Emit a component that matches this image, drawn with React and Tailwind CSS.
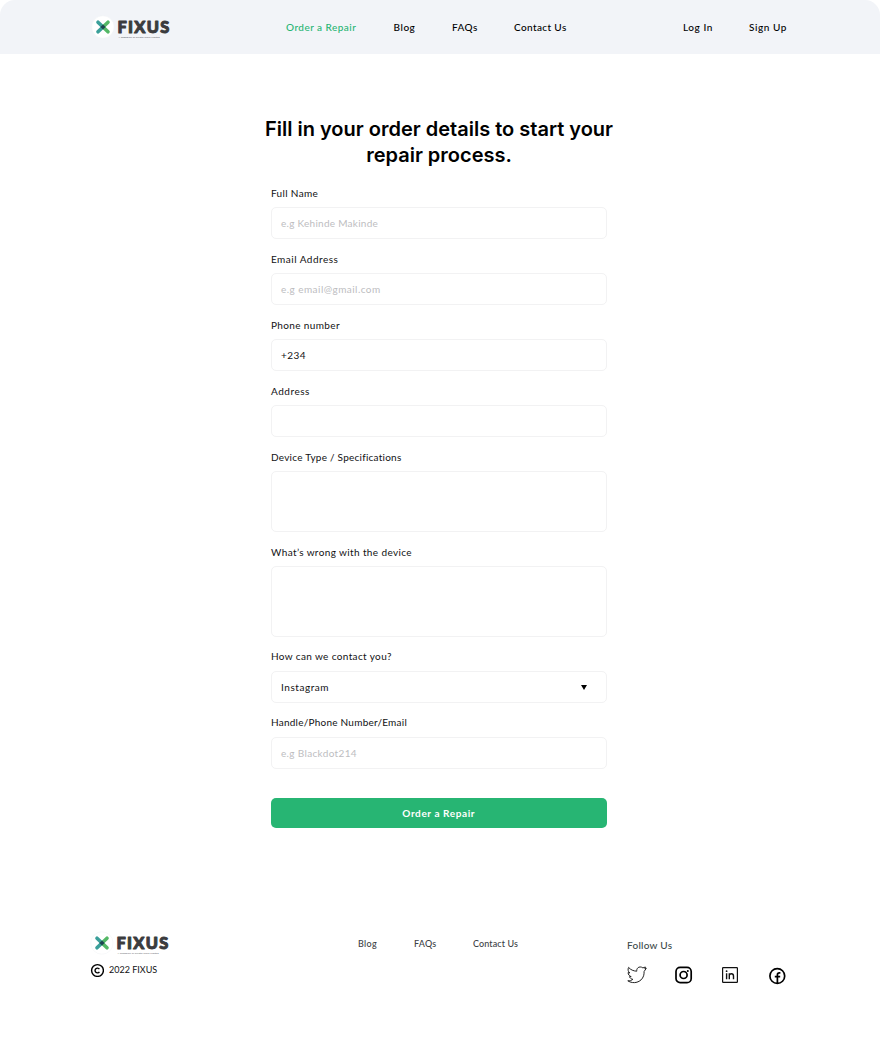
import React from "react";

function Logo({ className }) {
  return (
    <svg width="80" height="24" viewBox="0 0 80 24" className={className} role="img" aria-label="Fixus">
      <circle cx="11.9" cy="12" r="11.2" fill="#ffffff" stroke="#f1f2f4" strokeWidth="0.5" />
      <g strokeWidth="3.6" strokeLinecap="round">
        <path d="M7 7.2 12 12" stroke="#3a9f9a" />
        <path d="M12 12 17 7.2" stroke="#54b866" />
        <path d="M7 16.8 12 12" stroke="#3a9f9a" />
        <path d="M12 12 17 16.8" stroke="#54b866" />
      </g>
      <path d="M12 9.4 14.6 12 12 14.6 9.4 12Z" fill="#1c4450" />
      <text
        x="26.4"
        y="18.1"
        textLength="51.8"
        lengthAdjust="spacing"
        fill="#3b3c3e"
        stroke="#3b3c3e"
        strokeWidth="1"
        strokeLinejoin="round"
        className="font-['Lato',sans-serif] text-[16.4px] font-black"
      >
        FIXUS
      </text>
      <text
        x="27.6"
        y="22.6"
        textLength="41"
        lengthAdjust="spacingAndGlyphs"
        fill="#66686c"
        className="font-['Lato',sans-serif] text-[2.6px]"
      >
        A subsidiary of Crystal Wave Limited
      </text>
    </svg>
  );
}

function Field({ label, labelClass, boxClass = "h-[32px]", children }) {
  return (
    <div>
      <div className={`h-[14px] text-[10px] leading-[14px] whitespace-nowrap ${labelClass}`}>{label}</div>
      <div
        className={`mt-[7.4px] flex w-full items-center rounded-[5px] border border-[#f2f2f3] px-[9px] text-[10px] leading-[14px] ${boxClass}`}
      >
        {children}
      </div>
    </div>
  );
}

function Copyright() {
  return (
    <svg width="14" height="14" viewBox="0 0 14 14" fill="none" stroke="#000" strokeWidth="1.4">
      <circle cx="7.5" cy="7.5" r="5.9" />
      <path d="M9.4 6.1A2.4 2.4 0 1 0 9.4 8.9" />
    </svg>
  );
}

function Twitter() {
  return (
    <svg width="20" height="18" viewBox="0 0 20 18" fill="none" stroke="#222" strokeWidth="1" strokeLinejoin="round">
      <path d="M19.3 2.3 17.9 2.9 18.4 1 15.9 1.9C14.2.6 12 .7 10.8 1.9 9.9 2.8 9.6 4 9.8 5.2 6.5 5.1 3.6 3.8 1.6 1.4.6 3.2 1 5.6 2.8 7L1.1 6.6C1.1 8.5 2.3 10.1 4.2 10.6L2.5 10.7C3 12.2 4.3 13.2 5.9 13.3 4.5 14.5 2.7 15 .8 14.8 6.4 18.5 14.4 16.5 16.6 9.8 17 8.5 17.1 7.3 17.1 5.5Z" />
    </svg>
  );
}

function Instagram() {
  return (
    <svg width="18" height="18" viewBox="0 0 18 18" fill="none" stroke="#000" strokeWidth="1.7">
      <rect x="1" y="1.4" width="15.2" height="15.2" rx="4.2" />
      <circle cx="8.6" cy="9" r="3.5" />
      <circle cx="12.8" cy="4.9" r="1" fill="#000" stroke="none" />
    </svg>
  );
}

function LinkedIn() {
  return (
    <svg width="16" height="16" viewBox="0 0 16 16" fill="none" stroke="#111">
      <rect x="0.6" y="0.6" width="14.8" height="14.8" rx="0.6" strokeWidth="1.2" />
      <path d="M4.6 6.3V12.2M7.3 6.3V12.2M7.3 9C7.3 7.4 8.2 6.7 9.4 6.7S11.5 7.5 11.5 9V12.2" strokeWidth="1.4" />
      <circle cx="4.6" cy="4.2" r="0.9" fill="#111" stroke="none" />
    </svg>
  );
}

function Facebook() {
  return (
    <svg width="18" height="18" viewBox="0 0 18 18" fill="none" stroke="#000" strokeWidth="1.7">
      <circle cx="9.3" cy="9" r="7.4" />
      <path d="M9.4 16.4V7.9C9.4 6.5 10.1 5.9 11.3 5.9H12.4M6.8 9.6H12.2" />
    </svg>
  );
}

export default function App() {
  return (
    <div className="h-[1052px] w-[880px] overflow-hidden bg-white font-['Lato',sans-serif] text-[#111113]">
      <header className="flex h-[54px] items-center rounded-t-[15px] bg-[#f2f4f8] pl-[91px] text-[10px] leading-[14px] font-medium whitespace-nowrap text-black">
        <Logo />
        <nav className="ml-[115px] flex pb-px">
          <a className="w-[107.5px] tracking-[0.46px] text-[#27b573]">Order a Repair</a>
          <a className="w-[58.5px] tracking-[0.55px]">Blog</a>
          <a className="w-[62px] tracking-[0.42px]">FAQs</a>
          <a className="w-[169px] tracking-[0.38px]">Contact Us</a>
          <a className="w-[66px] tracking-[0.55px]">Log In</a>
          <a className="tracking-[0.55px]">Sign Up</a>
        </nav>
      </header>

      <main className="ml-[271px] w-[336px] pt-[62px]">
        <h1 className="-mx-[10px] text-center font-['Inter',sans-serif] text-[20px] leading-[26px] font-semibold whitespace-nowrap text-black">
          Fill in your order details to start your
          <br />
          repair process.
        </h1>
        <form className="mt-[18px] flex flex-col gap-[12.5px]">
          <Field label="Full Name" labelClass="tracking-[0.34px]">
            <span className="tracking-[0.27px] text-[#bdbdbf]">e.g Kehinde Makinde</span>
          </Field>
          <Field label="Email Address" labelClass="tracking-[0.48px]">
            <span className="tracking-[0.45px] text-[#bdbdbf]">e.g email@gmail.com</span>
          </Field>
          <Field label="Phone number" labelClass="tracking-[0.37px]">
            <span className="tracking-[0.45px]">+234</span>
          </Field>
          <Field label="Address" labelClass="tracking-[0.53px]" />
          <Field label="Device Type / Specifications" labelClass="tracking-[0.24px]" boxClass="h-[61.5px]" />
          <Field label="What’s wrong with the device" labelClass="tracking-[0.38px]" boxClass="h-[70.5px]" />
          <Field label="How can we contact you?" labelClass="tracking-[0.37px]">
            <span className="tracking-[0.54px]">Instagram</span>
            <svg width="6" height="5" viewBox="0 0 6 5" className="mt-px mr-[10px] ml-auto">
              <path d="M0 0H6L3 5Z" fill="#000" />
            </svg>
          </Field>
          <Field label="Handle/Phone Number/Email" labelClass="tracking-[0.24px]">
            <span className="tracking-[0.34px] text-[#bdbdbf]">e.g Blackdot214</span>
          </Field>
          <button
            type="button"
            className="mt-[16.5px] -ml-[0.5px] h-[30px] w-[336.5px] rounded-[5px] bg-[#27b573] pt-px text-[10px] leading-[14px] font-bold tracking-[0.59px] text-white"
          >
            Order a Repair
          </button>
        </form>
      </main>

      <footer className="mt-[103px] flex pl-[90px] whitespace-nowrap">
        <div className="w-[268px]">
          <Logo />
          <div className="mt-[8px] flex items-center text-[9px] leading-[14px]">
            <Copyright />
            <span className="ml-[5px]">2022 FIXUS</span>
          </div>
        </div>
        <nav className="flex w-[269px] pt-[7px] text-[9px] leading-[12px] font-medium text-[#3d4246]">
          <a className="w-[56px] tracking-[0.3px]">Blog</a>
          <a className="w-[59px] tracking-[0.2px]">FAQs</a>
          <a className="tracking-[0.12px]">Contact Us</a>
        </nav>
        <div className="pt-[7px]">
          <div className="text-[10px] leading-[14px] font-medium tracking-[0.26px] text-[#3d4a4a]">Follow Us</div>
          <div className="mt-[13px] flex items-center">
            <Twitter />
            <span className="ml-[28px]">
              <Instagram />
            </span>
            <span className="ml-[29px]">
              <LinkedIn />
            </span>
            <span className="mt-[2px] ml-[30px]">
              <Facebook />
            </span>
          </div>
        </div>
      </footer>
    </div>
  );
}
